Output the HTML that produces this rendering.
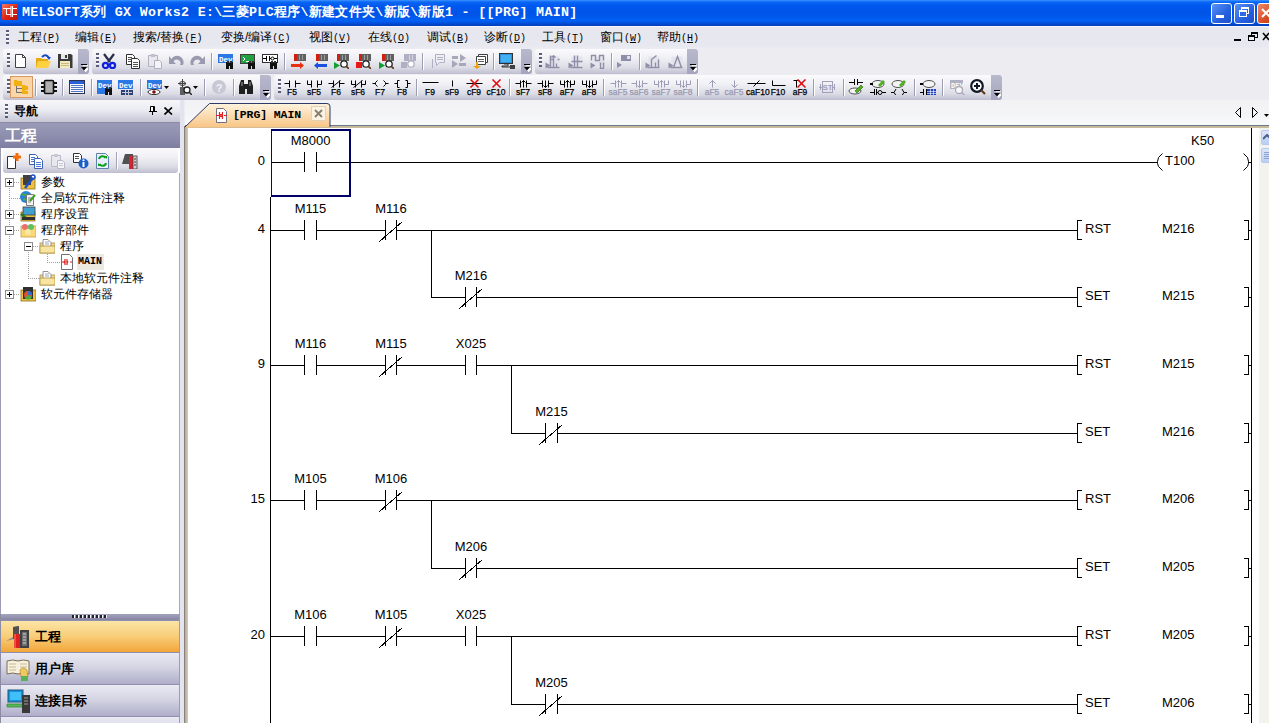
<!DOCTYPE html><html><head><meta charset="utf-8"><style>
*{margin:0;padding:0;box-sizing:border-box}
html,body{width:1269px;height:723px;overflow:hidden;background:#ECECF1;font-family:"Liberation Sans",sans-serif;font-size:12px;color:#000;position:relative}
.a{position:absolute}
#title{left:0;top:0;width:1269px;height:26px;background:linear-gradient(#3D95FF 0px,#0A66F5 2px,#0058EE 6px,#0054E6 14px,#0060F5 21px,#0048D0 24px,#003CB8 26px)}
#title .t{left:22px;top:5px;color:#fff;font-family:"Liberation Mono",monospace;font-weight:bold;font-size:13.3px;white-space:nowrap;letter-spacing:0.3px;line-height:15px}
.mi{top:30px;font-size:12px;white-space:nowrap;line-height:14px}
.tb{height:25px;border-radius:3px;background:linear-gradient(#FBFBFD,#F0F0F5 35%,#DCDCE6 75%,#BDBDCF)}
.grip{width:3px;height:14px;top:4px;background:repeating-linear-gradient(#5C5C78 0 2px,#fff 2px 3px,transparent 3px 4px)}
.chev{top:0;right:0;width:11px;height:25px;border-radius:0 3px 3px 0;background:linear-gradient(#B9B9CD,#A4A4BE)}
.sep{width:1px;height:17px;top:4px;background:#A3A3B8;box-shadow:1px 0 0 #fff}
.ic{width:16px;height:16px;top:4px}
.fk{top:0;width:20px;height:25px}
.fk .l{position:absolute;left:0;width:100%;top:13px;text-align:center;font-size:8.5px;line-height:8px;font-weight:normal;-webkit-text-stroke:0.25px #000;font-family:"Liberation Sans",sans-serif;color:#000}
.fk.g .l{color:#9898B0;-webkit-text-stroke:0.25px #9898B0}
.tree{font-size:12px;line-height:14px;white-space:nowrap}
.ob{left:0;width:180px;height:32px;border-top:1px solid #8F8FAF}
.ob .tx{position:absolute;left:35px;top:8px;font-size:13px;font-weight:bold;line-height:15px}
</style></head><body>
<div id="title" class="a">
<div class="a" style="left:2px;top:4px;width:16px;height:16px;background:linear-gradient(135deg,#F87A60,#E02818 50%,#B81008);border-radius:1px"></div>
<svg class="a" style="left:2px;top:4px" width="16" height="16"><path d="M1 4.5H9M4.5 4.5V10.5H9M9 2v11M10.5 2v11M10.5 4.5H15M10.5 10.5H15" stroke="#fff" stroke-width="1" fill="none"/></svg>
<div class="t a">MELSOFT系列 GX Works2 E:\三菱PLC程序\新建文件夹\新版\新版1 - [[PRG] MAIN]</div>
<div class="a" style="left:1211px;top:3px;width:21px;height:21px;border:1px solid #fff;border-radius:3px;background:linear-gradient(135deg,#5A92F5,#2560E0 60%,#1F4FC8)"></div>
<div class="a" style="left:1216px;top:15px;width:8px;height:3px;background:#fff"></div>
<div class="a" style="left:1234px;top:3px;width:21px;height:21px;border:1px solid #fff;border-radius:3px;background:linear-gradient(135deg,#5A92F5,#2560E0 60%,#1F4FC8)"></div>
<div class="a" style="left:1241px;top:7px;width:8px;height:7px;border:1px solid #fff;border-top-width:2px"></div>
<div class="a" style="left:1239px;top:10px;width:8px;height:7px;border:1px solid #fff;border-top-width:2px;background:#2D68E4"></div>
<div class="a" style="left:1257px;top:3px;width:21px;height:21px;border:1px solid #fff;border-radius:3px;background:linear-gradient(135deg,#F08A68,#D84A22 60%,#C03A16)"></div>
<svg class="a" style="left:1260px;top:6px" width="12" height="14"><path d="M2 3L10 11M10 3L2 11" stroke="#fff" stroke-width="2"/></svg>
</div>
<div class="a" style="left:0;top:26px;width:1269px;height:23px;background:linear-gradient(#F4F6FA 0,#F4F6FA 1px,#E6E6EE 1px,#E8E8F0 20px,#ECECF2)"></div>
<div class="a grip" style="left:6px;top:30px;height:14px"></div>
<div class="a mi" style="left:18px">工程<span style="font-family:'Liberation Mono',monospace;font-size:10px">(<u>P</u>)</span></div>
<div class="a mi" style="left:75px">编辑<span style="font-family:'Liberation Mono',monospace;font-size:10px">(<u>E</u>)</span></div>
<div class="a mi" style="left:133px">搜索/替换<span style="font-family:'Liberation Mono',monospace;font-size:10px">(<u>F</u>)</span></div>
<div class="a mi" style="left:221px">变换/编译<span style="font-family:'Liberation Mono',monospace;font-size:10px">(<u>C</u>)</span></div>
<div class="a mi" style="left:309px">视图<span style="font-family:'Liberation Mono',monospace;font-size:10px">(<u>V</u>)</span></div>
<div class="a mi" style="left:368px">在线<span style="font-family:'Liberation Mono',monospace;font-size:10px">(<u>O</u>)</span></div>
<div class="a mi" style="left:427px">调试<span style="font-family:'Liberation Mono',monospace;font-size:10px">(<u>B</u>)</span></div>
<div class="a mi" style="left:484px">诊断<span style="font-family:'Liberation Mono',monospace;font-size:10px">(<u>D</u>)</span></div>
<div class="a mi" style="left:542px">工具<span style="font-family:'Liberation Mono',monospace;font-size:10px">(<u>T</u>)</span></div>
<div class="a mi" style="left:600px">窗口<span style="font-family:'Liberation Mono',monospace;font-size:10px">(<u>W</u>)</span></div>
<div class="a mi" style="left:657px">帮助<span style="font-family:'Liberation Mono',monospace;font-size:10px">(<u>H</u>)</span></div>
<div class="a" style="left:1234px;top:39px;width:7px;height:2px;background:#000"></div>
<div class="a" style="left:1251px;top:32px;width:7px;height:6px;border:1px solid #000;border-top-width:2px"></div>
<div class="a" style="left:1248px;top:35px;width:7px;height:6px;border:1px solid #000;border-top-width:2px;background:#EDEDF2"></div>
<svg class="a" style="left:1262px;top:32px" width="8" height="9"><path d="M1 1L7 8M7 1L1 8" stroke="#000" stroke-width="1.5"/></svg>
<div class="a tb" style="left:3px;top:49px;width:86px">
<div class="a grip" style="left:4px"></div>
<div class="a chev"><svg class="a" style="left:2px;top:15px" width="8" height="8"><path d="M2 1h6M2 3.5h6l-3 3.5z" stroke="#fff" stroke-width="1" fill="#fff" transform="translate(0.7,0.7)"/><path d="M1 0.5h6M1 3h6l-3 3.5z" stroke="none" fill="#000"/><path d="M1 0.5h6" stroke="#000"/></svg></div>
</div>
<div class="a tb" style="left:92px;top:49px;width:440px">
<div class="a grip" style="left:4px"></div>
<div class="a chev"><svg class="a" style="left:2px;top:15px" width="8" height="8"><path d="M2 1h6M2 3.5h6l-3 3.5z" stroke="#fff" stroke-width="1" fill="#fff" transform="translate(0.7,0.7)"/><path d="M1 0.5h6M1 3h6l-3 3.5z" stroke="none" fill="#000"/><path d="M1 0.5h6" stroke="#000"/></svg></div>
</div>
<div class="a tb" style="left:535px;top:49px;width:163px">
<div class="a grip" style="left:4px"></div>
<div class="a chev"><svg class="a" style="left:2px;top:15px" width="8" height="8"><path d="M2 1h6M2 3.5h6l-3 3.5z" stroke="#fff" stroke-width="1" fill="#fff" transform="translate(0.7,0.7)"/><path d="M1 0.5h6M1 3h6l-3 3.5z" stroke="none" fill="#000"/><path d="M1 0.5h6" stroke="#000"/></svg></div>
</div>
<div class="a tb" style="left:3px;top:75px;width:268px">
<div class="a grip" style="left:4px"></div>
<div class="a chev"><svg class="a" style="left:2px;top:15px" width="8" height="8"><path d="M2 1h6M2 3.5h6l-3 3.5z" stroke="#fff" stroke-width="1" fill="#fff" transform="translate(0.7,0.7)"/><path d="M1 0.5h6M1 3h6l-3 3.5z" stroke="none" fill="#000"/><path d="M1 0.5h6" stroke="#000"/></svg></div>
</div>
<div class="a tb" style="left:274px;top:75px;width:728px">
<div class="a grip" style="left:4px"></div>
<div class="a chev"><svg class="a" style="left:2px;top:15px" width="8" height="8"><path d="M2 1h6M2 3.5h6l-3 3.5z" stroke="#fff" stroke-width="1" fill="#fff" transform="translate(0.7,0.7)"/><path d="M1 0.5h6M1 3h6l-3 3.5z" stroke="none" fill="#000"/><path d="M1 0.5h6" stroke="#000"/></svg></div>
</div>
<svg class="a" style="left:13px;top:53px" width="16" height="16" viewBox="0 0 16 16"><path d="M2.5 1.5h7l3 3v10h-10z" fill="#fff" stroke="#404040"/><path d="M9.5 1.5v3h3" fill="none" stroke="#404040"/></svg>
<svg class="a" style="left:35px;top:53px" width="16" height="16" viewBox="0 0 16 16"><path d="M1 5h5l1 1h6v8H1z" fill="#E8A810"/><path d="M3 8h13l-3 7H1z" fill="#FFD040"/><path d="M7 4q4-4 7 1" stroke="#1848C0" stroke-width="2" fill="none"/><path d="M12 4h4l-2 3z" fill="#1848C0"/></svg>
<svg class="a" style="left:57px;top:53px" width="16" height="16" viewBox="0 0 16 16"><path d="M1 1h13l1.5 1.5V15H1z" fill="#3A3A3A"/><rect x="4" y="1" width="7" height="5" fill="#E8E8E8"/><rect x="8" y="2" width="2" height="3" fill="#3A3A3A"/><rect x="3" y="8" width="10" height="7" fill="#F2E8C0"/><path d="M4 10.5h8M4 12.5h8" stroke="#C8B880"/></svg>
<svg class="a" style="left:101px;top:53px" width="16" height="16" viewBox="0 0 16 16"><path d="M3 1l6 8M13 1L7 9" stroke="#283048" stroke-width="2.2"/><circle cx="4.5" cy="12.5" r="2.6" fill="none" stroke="#1020E0" stroke-width="2.2"/><circle cx="11.5" cy="12.5" r="2.6" fill="none" stroke="#1020E0" stroke-width="2.2"/></svg>
<svg class="a" style="left:125px;top:53px" width="16" height="16" viewBox="0 0 16 16"><path d="M1.5 1.5h6l2 2v8h-8z" fill="#fff" stroke="#303030"/><path d="M6.5 5.5h6l2 2v8h-8z" fill="#fff" stroke="#303030"/><path d="M3 4.5h4M3 6.5h4M3 8.5h3M8 9.5h5M8 11.5h5M8 13.5h5" stroke="#505050"/></svg>
<svg class="a" style="left:147px;top:53px" width="16" height="16" viewBox="0 0 16 16"><path d="M1.5 2.5h9v11h-9z" fill="#E8E8EE" stroke="#B0B0C0"/><rect x="4" y="1" width="4" height="3" fill="#C0C0CC"/><path d="M7.5 7.5h5l2 2v6h-7z" fill="#F4F4F8" stroke="#B0B0C0"/></svg>
<svg class="a" style="left:168px;top:53px" width="16" height="16" viewBox="0 0 16 16"><path d="M1 3v8h7l-2.5-2.5A3.5 3.5 0 0 1 12 12h3A6.5 6.5 0 0 0 3.5 6z" fill="#9A9AAE"/></svg>
<svg class="a" style="left:190px;top:53px" width="16" height="16" viewBox="0 0 16 16"><path d="M15 3v8H8l2.5-2.5A3.5 3.5 0 0 0 4 12H1A6.5 6.5 0 0 1 12.5 6z" fill="#9A9AAE"/></svg>
<div class="a" style="left:211px;top:53px;width:1px;height:17px;background:#9C9CB2;box-shadow:1px 0 0 #fff"></div>
<svg class="a" style="left:218px;top:53px" width="16" height="16" viewBox="0 0 16 16"><rect x="0" y="1" width="15" height="9" fill="#2B78E4"/><text x="1" y="8.5" font-size="7.5" font-weight="bold" fill="#fff" font-family="Liberation Mono">Dev</text><path d="M8 9h3v1h1V9h3v7h-3v-3h-1v3H8z" fill="#101010"/><rect x="9" y="8" width="2" height="2" fill="#303030"/><rect x="12" y="8" width="2" height="2" fill="#303030"/></svg>
<svg class="a" style="left:240px;top:53px" width="16" height="16" viewBox="0 0 16 16"><rect x="0.5" y="1.5" width="14" height="9" fill="#20A040" stroke="#404040"/><path d="M3 4l2 2-2 2M6 8.5h4" stroke="#fff" fill="none"/><path d="M8 9h3v1h1V9h3v7h-3v-3h-1v3H8z" fill="#101010"/><rect x="9" y="8" width="2" height="2" fill="#303030"/><rect x="12" y="8" width="2" height="2" fill="#303030"/></svg>
<svg class="a" style="left:262px;top:53px" width="16" height="16" viewBox="0 0 16 16"><rect x="0.5" y="1.5" width="15" height="8" fill="#fff" stroke="#303030"/><path d="M1 5.5h3M4.5 3v5M7.5 3v5M7 5.5h2M12 5.5h3" stroke="#000"/><circle cx="10.5" cy="5.5" r="1.5" fill="none" stroke="#000"/><path d="M8 9h3v1h1V9h3v7h-3v-3h-1v3H8z" fill="#101010"/><rect x="9" y="8" width="2" height="2" fill="#303030"/><rect x="12" y="8" width="2" height="2" fill="#303030"/></svg>
<div class="a" style="left:284px;top:53px;width:1px;height:17px;background:#9C9CB2;box-shadow:1px 0 0 #fff"></div>
<svg class="a" style="left:290px;top:53px" width="16" height="16" viewBox="0 0 16 16"><rect x="4" y="1" width="12" height="7" fill="#606060"/><rect x="4" y="1" width="3" height="7" fill="#D02010"/><path d="M9.5 2v5M12.5 2v5" stroke="#A0A0A0"/><path d="M1 11h9v-2l4 3.5-4 3.5v-2H1z" fill="#E83010"/></svg>
<svg class="a" style="left:312px;top:53px" width="16" height="16" viewBox="0 0 16 16"><rect x="4" y="1" width="12" height="7" fill="#606060"/><rect x="4" y="1" width="3" height="7" fill="#D02010"/><path d="M9.5 2v5M12.5 2v5" stroke="#A0A0A0"/><path d="M15 11H6V9l-4 3.5 4 3.5v-2h9z" fill="#1850E0"/></svg>
<svg class="a" style="left:333px;top:53px" width="16" height="16" viewBox="0 0 16 16"><rect x="4" y="1" width="12" height="7" fill="#606060"/><rect x="4" y="1" width="3" height="7" fill="#D02010"/><path d="M9.5 2v5M12.5 2v5" stroke="#A0A0A0"/><path d="M1 9v7l6-3.5z" fill="#10A030"/><circle cx="11" cy="11" r="3.2" fill="#fff" stroke="#202020" stroke-width="1.3"/><path d="M13 13l3 3" stroke="#603010" stroke-width="1.6"/></svg>
<svg class="a" style="left:355px;top:53px" width="16" height="16" viewBox="0 0 16 16"><rect x="4" y="1" width="12" height="7" fill="#606060"/><rect x="4" y="1" width="3" height="7" fill="#D02010"/><path d="M9.5 2v5M12.5 2v5" stroke="#A0A0A0"/><rect x="1" y="9" width="6" height="6" fill="#E81818"/><circle cx="11" cy="11" r="3.2" fill="#fff" stroke="#202020" stroke-width="1.3"/><path d="M13 13l3 3" stroke="#603010" stroke-width="1.6"/></svg>
<svg class="a" style="left:378px;top:53px" width="16" height="16" viewBox="0 0 16 16"><rect x="4" y="1" width="12" height="7" fill="#606060"/><rect x="4" y="1" width="3" height="7" fill="#D02010"/><path d="M9.5 2v5M12.5 2v5" stroke="#A0A0A0"/><path d="M1 9v7l6-3.5z" fill="#10A030"/><circle cx="11" cy="11" r="3.2" fill="#fff" stroke="#202020" stroke-width="1.3"/><path d="M13 13l3 3" stroke="#603010" stroke-width="1.6"/></svg>
<svg class="a" style="left:400px;top:53px" width="16" height="16" viewBox="0 0 16 16"><rect x="4" y="1" width="12" height="7" fill="#B0B0C4"/><path d="M9.5 2v5M12.5 2v5" stroke="#D8D8E0"/><rect x="1" y="9" width="6" height="6" fill="#B0B0C4"/><circle cx="11" cy="11" r="3.2" fill="#fff" stroke="#B0B0C4" stroke-width="1.3"/></svg>
<div class="a" style="left:422px;top:53px;width:1px;height:17px;background:#9C9CB2;box-shadow:1px 0 0 #fff"></div>
<svg class="a" style="left:430px;top:53px" width="16" height="16" viewBox="0 0 16 16"><path d="M5.5 1.5h9v8h-5l-3 3v-3h-1z" fill="#F0F0F4" stroke="#B0B0C4"/><path d="M2.5 6v9" stroke="#B0B0C4"/><path d="M7 4.5h6M7 6.5h6" stroke="#B0B0C4"/></svg>
<svg class="a" style="left:451px;top:53px" width="16" height="16" viewBox="0 0 16 16"><path d="M9 1l6 4-6 4zM1 7l6 4-6 4z" fill="#A8A8B8"/><rect x="1" y="3" width="6" height="3" fill="#A8A8B8"/><rect x="8" y="10" width="7" height="3" fill="#A8A8B8"/></svg>
<svg class="a" style="left:472px;top:53px" width="16" height="16" viewBox="0 0 16 16"><path d="M6.5 1.5h9v8h-9z" fill="#fff" stroke="#404040"/><path d="M4.5 3.5h9v8h-9z" fill="#fff" stroke="#404040"/><path d="M6 6.5h6M6 8.5h6" stroke="#606060"/><path d="M4 9v4h-3l4 3 4-3H6V9z" fill="#F0A010"/></svg>
<div class="a" style="left:493px;top:53px;width:1px;height:17px;background:#9C9CB2;box-shadow:1px 0 0 #fff"></div>
<svg class="a" style="left:499px;top:53px" width="16" height="16" viewBox="0 0 16 16"><rect x="0.5" y="0.5" width="13" height="10" fill="#3090E0" stroke="#303030"/><rect x="2" y="2" width="10" height="7" fill="#40B0F0"/><path d="M5 11h4v2H3v1h8" stroke="#303030" fill="none"/><rect x="11" y="12" width="5" height="4" fill="#404040"/></svg>
<svg class="a" style="left:544px;top:53px" width="16" height="16" viewBox="0 0 16 16"><g transform="translate(0.5,0.5)"><rect x="4" y="3" width="11" height="11" fill="#E4E4EC"/><path d="M1 9v6l5-3z" fill="#8E8EA8"/><path d="M3 14h12M6 2v12M9 2v12M6 6h3M12 10v4M13 6h2" stroke="#8E8EA8" stroke-width="1.4"/><path d="M7 4q2-3 4 0" stroke="#8E8EA8" stroke-width="1.4" fill="none"/></g></svg>
<svg class="a" style="left:567px;top:53px" width="16" height="16" viewBox="0 0 16 16"><g transform="translate(0.5,0.5)"><rect x="4" y="3" width="11" height="11" fill="#E4E4EC"/><path d="M1 9v6l5-3z" fill="#8E8EA8"/><path d="M3 14h12M7 2v12M10 2v12M4 8h11" stroke="#8E8EA8" stroke-width="1.4"/></g></svg>
<svg class="a" style="left:589px;top:53px" width="16" height="16" viewBox="0 0 16 16"><g transform="translate(0.5,0.5)"><rect x="4" y="3" width="11" height="11" fill="#E4E4EC"/><path d="M1 9v6l5-3z" fill="#8E8EA8"/><path d="M2 7V2h4v5h4V2h4v5M11 9v6h3V9" stroke="#8E8EA8" stroke-width="1.4" fill="none"/></g></svg>
<div class="a" style="left:611px;top:53px;width:1px;height:17px;background:#9C9CB2;box-shadow:1px 0 0 #fff"></div>
<svg class="a" style="left:616px;top:53px" width="16" height="16" viewBox="0 0 16 16"><path d="M1 9v6l5-3z" fill="#8E8EA8"/><rect x="5" y="2" width="10" height="6" fill="#8E8EA8"/><rect x="11" y="3" width="3" height="3" fill="#E0E0E8"/></svg>
<div class="a" style="left:639px;top:53px;width:1px;height:17px;background:#9C9CB2;box-shadow:1px 0 0 #fff"></div>
<svg class="a" style="left:644px;top:53px" width="16" height="16" viewBox="0 0 16 16"><g transform="translate(0.5,0.5)"><rect x="4" y="3" width="11" height="11" fill="#E4E4EC"/><path d="M1 9v6l5-3z" fill="#8E8EA8"/><path d="M3 14h12M7 14V6l5-4M11 14V9M14 14V6" stroke="#8E8EA8" stroke-width="1.4" fill="none"/></g></svg>
<svg class="a" style="left:667px;top:53px" width="16" height="16" viewBox="0 0 16 16"><g transform="translate(0.5,0.5)"><rect x="4" y="3" width="11" height="11" fill="#E4E4EC"/><path d="M1 9v6l5-3z" fill="#8E8EA8"/><path d="M3 14h12M6 14l4-11 4 11" stroke="#8E8EA8" stroke-width="1.4" fill="none"/></g></svg>
<div class="a" style="left:10px;top:76px;width:23px;height:22px;background:#FAD6A8;border:1px solid #D89860"></div>
<svg class="a" style="left:13px;top:79px" width="16" height="16" viewBox="0 0 16 16"><path d="M3.5 6v7.5h6M3.5 9.5h6" stroke="#707070" fill="none"/><path d="M1 1h3l1 1h4v5H1z" fill="#F0B010"/><path d="M9 6h3l1 1h2v4H9z" fill="#F0B010"/><path d="M9 11h3l1 1h2v3H9z" fill="#F0B010"/></svg>
<div class="a" style="left:35px;top:79px;width:1px;height:17px;background:#9C9CB2;box-shadow:1px 0 0 #fff"></div>
<svg class="a" style="left:41px;top:79px" width="16" height="16" viewBox="0 0 16 16"><rect x="3.5" y="1.5" width="9" height="13" rx="1" fill="#B0B0B0" stroke="#101010" stroke-width="1.6"/><path d="M0 4h3M0 8h3M0 12h3M13 4h3M13 8h3M13 12h3" stroke="#101010" stroke-width="2"/></svg>
<div class="a" style="left:62px;top:79px;width:1px;height:17px;background:#9C9CB2;box-shadow:1px 0 0 #fff"></div>
<svg class="a" style="left:69px;top:79px" width="16" height="16" viewBox="0 0 16 16"><rect x="0.5" y="1.5" width="15" height="13" fill="#F8F8FC" stroke="#30304A"/><rect x="1" y="2" width="14" height="3" fill="#2860D8"/><path d="M2 6.5h12M2 8.5h12M2 10.5h12M2 12.5h12" stroke="#5078C8"/></svg>
<div class="a" style="left:91px;top:79px;width:1px;height:17px;background:#9C9CB2;box-shadow:1px 0 0 #fff"></div>
<svg class="a" style="left:97px;top:79px" width="16" height="16" viewBox="0 0 16 16"><rect x="0" y="1" width="15" height="9" fill="#2B78E4"/><text x="1" y="8.5" font-size="7.5" font-weight="bold" fill="#fff" font-family="Liberation Mono">Dev</text><rect x="0" y="9" width="8" height="6" fill="#2B78E4"/><path d="M8 9h3v1h1V9h3v7h-3v-3h-1v3H8z" fill="#101010"/><rect x="9" y="8" width="2" height="2" fill="#303030"/><rect x="12" y="8" width="2" height="2" fill="#303030"/></svg>
<svg class="a" style="left:118px;top:79px" width="16" height="16" viewBox="0 0 16 16"><rect x="0" y="1" width="15" height="9" fill="#2B78E4"/><text x="1" y="8.5" font-size="7.5" font-weight="bold" fill="#fff" font-family="Liberation Mono">Dev</text><rect x="3" y="11" width="12" height="5" fill="#304070"/><path d="M4 13.5h10M7.5 11v5M10.5 11v5" stroke="#C0C8E0"/></svg>
<div class="a" style="left:140px;top:79px;width:1px;height:17px;background:#9C9CB2;box-shadow:1px 0 0 #fff"></div>
<svg class="a" style="left:147px;top:79px" width="16" height="16" viewBox="0 0 16 16"><rect x="0" y="1" width="15" height="9" fill="#2B78E4"/><text x="1" y="8.5" font-size="7.5" font-weight="bold" fill="#fff" font-family="Liberation Mono">Dev</text><ellipse cx="7" cy="13" rx="6" ry="2.6" fill="#fff" stroke="#303030"/><circle cx="7" cy="13" r="1.8" fill="#801010"/></svg>
<svg class="a" style="left:164px;top:86px" width="5" height="3" viewBox="0 0 5 3"><path d="M0 0h5l-2.5 3z" fill="#000"/></svg>
<svg class="a" style="left:176px;top:79px" width="16" height="16" viewBox="0 0 16 16"><path d="M6.5 0v16M2 4.5h8" stroke="#404040"/><ellipse cx="6.5" cy="4.5" rx="3" ry="2" fill="none" stroke="#404040"/><rect x="4" y="8" width="5" height="8" fill="#606060"/><circle cx="11" cy="11" r="3" fill="#fff" stroke="#202020" stroke-width="1.3"/><path d="M13 13l3 3" stroke="#202020" stroke-width="1.5"/></svg>
<svg class="a" style="left:193px;top:86px" width="5" height="3" viewBox="0 0 5 3"><path d="M0 0h5l-2.5 3z" fill="#000"/></svg>
<div class="a" style="left:204px;top:79px;width:1px;height:17px;background:#9C9CB2;box-shadow:1px 0 0 #fff"></div>
<svg class="a" style="left:211px;top:79px" width="16" height="16" viewBox="0 0 16 16"><circle cx="8" cy="8" r="7" fill="#C8C8D4"/><text x="8" y="12.5" text-anchor="middle" font-size="11" font-weight="bold" fill="#F0F0F4" font-family="Liberation Sans">?</text></svg>
<div class="a" style="left:233px;top:79px;width:1px;height:17px;background:#9C9CB2;box-shadow:1px 0 0 #fff"></div>
<svg class="a" style="left:238px;top:79px" width="16" height="16" viewBox="0 0 16 16"><path d="M1 7l2-6h3v4h4V1h3l2 6v8h-6v-5H7v5H1z" fill="#202020"/><rect x="3" y="3" width="2" height="4" fill="#606060"/><rect x="11" y="3" width="2" height="4" fill="#606060"/></svg>
<div class="a fk" style="left:282px;top:75px"><svg class="a" style="left:0;top:4px" width="20" height="10" viewBox="0 0 20 10"><g transform="translate(0.5,0.5)"><path d="M2 4h5M7 1v7M13 1v7M13 4h5" stroke="#000" fill="none"/></g></svg><div class="l">F5</div></div>
<div class="a fk" style="left:304px;top:75px"><svg class="a" style="left:0;top:4px" width="20" height="10" viewBox="0 0 20 10"><g transform="translate(0.5,0.5)"><path d="M3 1v4h4M7 1v7M13 1v7M13 5h4M17 1v4" stroke="#000" fill="none"/></g></svg><div class="l">sF5</div></div>
<div class="a fk" style="left:326px;top:75px"><svg class="a" style="left:0;top:4px" width="20" height="10" viewBox="0 0 20 10"><g transform="translate(0.5,0.5)"><path d="M2 4h5M7 1v7M13 1v7M13 4h5M5 8l9-7" stroke="#000" fill="none"/></g></svg><div class="l">F6</div></div>
<div class="a fk" style="left:348px;top:75px"><svg class="a" style="left:0;top:4px" width="20" height="10" viewBox="0 0 20 10"><g transform="translate(0.5,0.5)"><path d="M3 1v4h4M7 1v7M13 1v7M13 5h4M17 1v4M5 8l9-7" stroke="#000" fill="none"/></g></svg><div class="l">sF6</div></div>
<div class="a fk" style="left:370px;top:75px"><svg class="a" style="left:0;top:4px" width="20" height="10" viewBox="0 0 20 10"><g transform="translate(0.5,0.5)"><path d="M2 4h3M18 4h-3M7 1L5 3v2l2 2M13 1l2 2v2l-2 2" stroke="#000" fill="none"/></g></svg><div class="l">F7</div></div>
<div class="a fk" style="left:392px;top:75px"><svg class="a" style="left:0;top:4px" width="20" height="10" viewBox="0 0 20 10"><g transform="translate(0.5,0.5)"><path d="M2 4h3M18 4h-3M7 1h-2v7h2M13 1h2v7h-2" stroke="#000" fill="none"/></g></svg><div class="l">F8</div></div>
<div class="a" style="left:416px;top:79px;width:1px;height:17px;background:#9C9CB2;box-shadow:1px 0 0 #fff"></div>
<div class="a fk" style="left:420px;top:75px"><svg class="a" style="left:0;top:4px" width="20" height="10" viewBox="0 0 20 10"><g transform="translate(0.5,0.5)"><path d="M2 3h16" stroke="#000"/></g></svg><div class="l">F9</div></div>
<div class="a fk" style="left:442px;top:75px"><svg class="a" style="left:0;top:4px" width="20" height="10" viewBox="0 0 20 10"><g transform="translate(0.5,0.5)"><path d="M10 1v6" stroke="#000"/></g></svg><div class="l">sF9</div></div>
<div class="a fk" style="left:464px;top:75px"><svg class="a" style="left:0;top:4px" width="20" height="10" viewBox="0 0 20 10"><g transform="translate(0.5,0.5)"><path d="M2 4h16" stroke="#000"/><path d="M6 0l8 8M14 0l-8 8" stroke="#E01010" stroke-width="1.6"/></g></svg><div class="l">cF9</div></div>
<div class="a fk" style="left:486px;top:75px"><svg class="a" style="left:0;top:4px" width="20" height="10" viewBox="0 0 20 10"><g transform="translate(0.5,0.5)"><path d="M6 0l8 8M14 0l-8 8" stroke="#E01010" stroke-width="1.6"/></g></svg><div class="l">cF10</div></div>
<div class="a" style="left:509px;top:79px;width:1px;height:17px;background:#9C9CB2;box-shadow:1px 0 0 #fff"></div>
<div class="a fk" style="left:513px;top:75px"><svg class="a" style="left:0;top:4px" width="20" height="10" viewBox="0 0 20 10"><g transform="translate(0.5,0.5)"><path d="M2 4h5M7 1v7M13 1v7M13 4h5M10 1v7M8 3l2-2 2 2" stroke="#000" fill="none"/></g></svg><div class="l">sF7</div></div>
<div class="a fk" style="left:535px;top:75px"><svg class="a" style="left:0;top:4px" width="20" height="10" viewBox="0 0 20 10"><g transform="translate(0.5,0.5)"><path d="M2 4h5M7 1v7M13 1v7M13 4h5M10 1v7M8 6l2 2 2-2" stroke="#000" fill="none"/></g></svg><div class="l">sF8</div></div>
<div class="a fk" style="left:557px;top:75px"><svg class="a" style="left:0;top:4px" width="20" height="10" viewBox="0 0 20 10"><g transform="translate(0.5,0.5)"><path d="M3 1v4h4M7 1v7M13 1v7M13 5h4M17 1v4M10 1v7M8 3l2-2 2 2" stroke="#000" fill="none"/></g></svg><div class="l">aF7</div></div>
<div class="a fk" style="left:579px;top:75px"><svg class="a" style="left:0;top:4px" width="20" height="10" viewBox="0 0 20 10"><g transform="translate(0.5,0.5)"><path d="M3 1v4h4M7 1v7M13 1v7M13 5h4M17 1v4M10 1v7M8 6l2 2 2-2" stroke="#000" fill="none"/></g></svg><div class="l">aF8</div></div>
<div class="a" style="left:603px;top:79px;width:1px;height:17px;background:#9C9CB2;box-shadow:1px 0 0 #fff"></div>
<div class="a fk g" style="left:608px;top:75px"><svg class="a" style="left:0;top:4px" width="20" height="10" viewBox="0 0 20 10"><g transform="translate(0.5,0.5)"><path d="M2 4h5M7 1v7M13 1v7M13 4h5M10 1v7M8 3l2-2 2 2" stroke="#9C9CB4" fill="none"/></g></svg><div class="l">saF5</div></div>
<div class="a fk g" style="left:629px;top:75px"><svg class="a" style="left:0;top:4px" width="20" height="10" viewBox="0 0 20 10"><g transform="translate(0.5,0.5)"><path d="M2 4h5M7 1v7M13 1v7M13 4h5M10 1v7M8 6l2 2 2-2" stroke="#9C9CB4" fill="none"/></g></svg><div class="l">saF6</div></div>
<div class="a fk g" style="left:651px;top:75px"><svg class="a" style="left:0;top:4px" width="20" height="10" viewBox="0 0 20 10"><g transform="translate(0.5,0.5)"><path d="M3 1v4h4M7 1v7M13 1v7M13 5h4M17 1v4M10 1v7M8 3l2-2 2 2" stroke="#9C9CB4" fill="none"/></g></svg><div class="l">saF7</div></div>
<div class="a fk g" style="left:673px;top:75px"><svg class="a" style="left:0;top:4px" width="20" height="10" viewBox="0 0 20 10"><g transform="translate(0.5,0.5)"><path d="M3 1v4h4M7 1v7M13 1v7M13 5h4M17 1v4M10 1v7M8 6l2 2 2-2" stroke="#9C9CB4" fill="none"/></g></svg><div class="l">saF8</div></div>
<div class="a" style="left:697px;top:79px;width:1px;height:17px;background:#9C9CB2;box-shadow:1px 0 0 #fff"></div>
<div class="a fk g" style="left:702px;top:75px"><svg class="a" style="left:0;top:4px" width="20" height="10" viewBox="0 0 20 10"><g transform="translate(0.5,0.5)"><path d="M10 1v7M7 4l3-3 3 3" stroke="#9C9CB4" fill="none"/></g></svg><div class="l">aF5</div></div>
<div class="a fk g" style="left:724px;top:75px"><svg class="a" style="left:0;top:4px" width="20" height="10" viewBox="0 0 20 10"><g transform="translate(0.5,0.5)"><path d="M10 1v7M7 5l3 3 3-3" stroke="#9C9CB4" fill="none"/></g></svg><div class="l">caF5</div></div>
<div class="a fk" style="left:746px;top:75px"><svg class="a" style="left:0;top:4px" width="20" height="10" viewBox="0 0 20 10"><g transform="translate(0.5,0.5)"><path d="M1 4h18M7 7l6-6" stroke="#000" fill="none"/></g></svg><div class="l">caF10</div></div>
<div class="a fk" style="left:768px;top:75px"><svg class="a" style="left:0;top:4px" width="20" height="10" viewBox="0 0 20 10"><g transform="translate(0.5,0.5)"><path d="M4 1v5h13" stroke="#000" fill="none"/></g></svg><div class="l">F10</div></div>
<div class="a fk" style="left:790px;top:75px"><svg class="a" style="left:0;top:4px" width="20" height="10" viewBox="0 0 20 10"><g transform="translate(0.5,0.5)"><path d="M3 1h6M6 1v7" stroke="#000"/><path d="M7 0l8 8M15 0l-8 8" stroke="#E01010" stroke-width="1.6"/></g></svg><div class="l">aF9</div></div>
<div class="a" style="left:813px;top:79px;width:1px;height:17px;background:#9C9CB2;box-shadow:1px 0 0 #fff"></div>
<svg class="a" style="left:819px;top:79px" width="16" height="16" viewBox="0 0 16 16"><rect x="3.5" y="2.5" width="10" height="11" fill="none" stroke="#A0A0B8"/><path d="M0 8.5h3M14 8.5h2M1.5 5v6M15.5 5v6" stroke="#A0A0B8"/><text x="8.5" y="11" text-anchor="middle" font-size="8" font-weight="bold" fill="#A0A0B8" font-family="Liberation Sans">ST</text></svg>
<div class="a" style="left:843px;top:79px;width:1px;height:17px;background:#9C9CB2;box-shadow:1px 0 0 #fff"></div>
<svg class="a" style="left:848px;top:79px" width="16" height="16" viewBox="0 0 16 16"><path d="M1 3.5h5M10 3.5h5M6.5 0v6M9.5 0v6" stroke="#000"/><ellipse cx="7" cy="12" rx="6" ry="3" fill="#F4F4F4" stroke="#505050"/><path d="M9 14l6-6-2-2-6 6z" fill="#50B020" stroke="#306010" stroke-width=".6"/></svg>
<svg class="a" style="left:870px;top:79px" width="16" height="16" viewBox="0 0 16 16"><ellipse cx="8" cy="5" rx="6" ry="3.5" fill="#F4F4F4" stroke="#505050"/><rect x="0" y="4" width="3" height="2" fill="#000"/><path d="M10 8l5-5-2-2-5 5z" fill="#50B020"/><path d="M0 13.5h4M4.5 10v6M6.5 10v6M6 13.5h2M12 13.5h4" stroke="#000"/><circle cx="10" cy="13.5" r="2" fill="none" stroke="#000"/></svg>
<svg class="a" style="left:891px;top:79px" width="16" height="16" viewBox="0 0 16 16"><ellipse cx="7" cy="5" rx="6" ry="3.5" fill="#F4F4F4" stroke="#505050"/><path d="M10 8l5-5-2-2-5 5z" fill="#50B020"/><path d="M0 13.5h3M5 10l-2 3.5 2 3M11 10l2 3.5-2 3M13 13.5h3" stroke="#000" fill="none"/></svg>
<div class="a" style="left:914px;top:79px;width:1px;height:17px;background:#9C9CB2;box-shadow:1px 0 0 #fff"></div>
<svg class="a" style="left:920px;top:79px" width="16" height="16" viewBox="0 0 16 16"><ellipse cx="9" cy="5" rx="6" ry="3.5" fill="#F4F4F4" stroke="#505050"/><rect x="0" y="4" width="3" height="2" fill="#000"/><path d="M0 13.5h3M3.5 10v6M6.5 10v6" stroke="#000"/><rect x="7" y="10" width="9" height="6" fill="#2040C0"/><path d="M7 12.5h9M7 14.5h9M10.5 10v6M13.5 10v6" stroke="#fff" stroke-width=".6"/></svg>
<div class="a" style="left:942px;top:79px;width:1px;height:17px;background:#9C9CB2;box-shadow:1px 0 0 #fff"></div>
<svg class="a" style="left:949px;top:79px" width="16" height="16" viewBox="0 0 16 16"><rect x="1" y="1" width="13" height="9" fill="#B0B0C4"/><text x="2" y="8.5" font-size="7" font-weight="bold" fill="#fff" font-family="Liberation Mono">DEV</text><circle cx="10" cy="11" r="3.5" fill="#F8F8F8" stroke="#A8A8BC" stroke-width="1.3"/><path d="M12.5 13.5l3 2.5" stroke="#A8A8BC" stroke-width="1.5"/></svg>
<svg class="a" style="left:970px;top:79px" width="16" height="16" viewBox="0 0 16 16"><circle cx="7" cy="7" r="5.8" fill="#fff" stroke="#101828" stroke-width="2.2"/><path d="M4 7h6M7 4v6" stroke="#101828" stroke-width="2"/><path d="M11 11l4 4" stroke="#603810" stroke-width="2.2"/></svg>
<div class="a" style="left:0;top:100px;width:180px;height:623px;background:#fff;border-left:1px solid #9C9CB4"></div>
<div class="a" style="left:0;top:100px;width:180px;height:23px;background:linear-gradient(#F6F6FA,#EAEAF2 45%,#C6C6D6 95%,#8C8CA8 95%)"></div>
<div class="a grip" style="left:5px;top:104px"></div>
<div class="a" style="left:14px;top:104px;font-size:12px;font-weight:bold;line-height:14px">导航</div>
<svg class="a" style="left:149px;top:106px" width="8" height="10"><path d="M1.5 0.5h4v5h-4z" fill="#fff" stroke="#000"/><rect x="4" y="1" width="2" height="4" fill="#000"/><path d="M0 5.5h8M3.5 5v4" stroke="#000"/></svg>
<svg class="a" style="left:164px;top:107px" width="9" height="8"><path d="M0.5 0.5L8 7.5M8 0.5L0.5 7.5" stroke="#000" stroke-width="1.7"/></svg>
<div class="a" style="left:0;top:123px;width:180px;height:25px;background:linear-gradient(#9A9AB8,#8E8EAE 50%,#7E7EA2)"></div>
<div class="a" style="left:5px;top:127px;font-size:16px;font-weight:bold;color:#fff;line-height:17px">工程</div>
<div class="a tb" style="left:3px;top:148px;width:175px;height:25px"></div>
<div class="a sep" style="left:116px;top:152px"></div>
<div class="a" style="left:179px;top:173px;width:1px;height:441px;background:#A8A8C0"></div>
<div class="a" style="left:180px;top:100px;width:4px;height:623px;background:#E4E4F0"></div>
<div class="a" style="left:184px;top:126px;width:1px;height:597px;background:#8A8278"></div>
<div class="a" style="left:0;top:614px;width:180px;height:6px;background:linear-gradient(#A4A4BE,#8686A4)"></div>
<div class="a" style="left:72px;top:615px;width:36px;height:3px;background:repeating-linear-gradient(90deg,#202030 0 2px,#fff 2px 3px,transparent 3px 4px)"></div>
<div class="a ob" style="top:620px;background:linear-gradient(#FCE5A6,#F8CD78 50%,#F2A53A)"><div class="tx">工程</div></div>
<div class="a ob" style="top:652px;background:linear-gradient(#EAEAF4,#D2D2E2 50%,#AEAECA)"><div class="tx">用户库</div></div>
<div class="a ob" style="top:684px;background:linear-gradient(#EAEAF4,#D2D2E2 50%,#AEAECA)"><div class="tx">连接目标</div></div>
<div class="a ob" style="top:716px;background:linear-gradient(#EAEAF4,#D2D2E2 50%,#AEAECA)"></div>
<div class="a" style="left:179px;top:614px;width:1px;height:109px;background:#9C9CB4"></div>
<div class="a" style="left:0;top:614px;width:1px;height:109px;background:#8C8CA4"></div>
<svg class="a" style="left:6px;top:153px" width="16" height="16" viewBox="0 0 16 16"><path d="M1.5 3.5h8v12h-8z" fill="#fff" stroke="#303030"/><path d="M11 0v8M7 4h8" stroke="#F07010" stroke-width="3"/></svg>
<svg class="a" style="left:28px;top:153px" width="16" height="16" viewBox="0 0 16 16"><path d="M1.5 1.5h6l2 2v8h-8z" fill="#fff" stroke="#4060B0"/><path d="M6.5 5.5h6l2 2v8h-8z" fill="#fff" stroke="#4060B0"/><path d="M3 4.5h4M3 6.5h4M3 8.5h3M8 9.5h5M8 11.5h5M8 13.5h5" stroke="#4878D0"/></svg>
<svg class="a" style="left:50px;top:153px" width="16" height="16" viewBox="0 0 16 16"><path d="M1.5 2.5h9v11h-9z" fill="#E8E8EE" stroke="#B8B8C8"/><rect x="4" y="1" width="4" height="3" fill="#C8C8D4"/><path d="M7.5 7.5h5l2 2v6h-7z" fill="#F4F4F8" stroke="#B8B8C8"/><path d="M9 10.5h4M9 12.5h4" stroke="#C8C8D4"/></svg>
<svg class="a" style="left:73px;top:153px" width="16" height="16" viewBox="0 0 16 16"><path d="M0.5 0.5h6l2 2v7h-8z" fill="#fff" stroke="#303030"/><path d="M2 3.5h4M2 5.5h4" stroke="#505050"/><circle cx="10.5" cy="10.5" r="5" fill="#1860C8"/><rect x="9.5" y="9" width="2" height="5" fill="#fff"/><rect x="9.5" y="6.5" width="2" height="1.6" fill="#fff"/></svg>
<svg class="a" style="left:96px;top:153px" width="16" height="16" viewBox="0 0 16 16"><path d="M0.5 0.5h9l3 3v12h-12z" fill="#E8F0FF" stroke="#6080B0"/><path d="M3 6a3.5 3.5 0 0 1 6.5-1M10 10a3.5 3.5 0 0 1-6.5 1" stroke="#10A020" stroke-width="2" fill="none"/><path d="M8 3h3v3zM5 13H2v-3z" fill="#10A020"/></svg>
<svg class="a" style="left:122px;top:153px" width="16" height="16" viewBox="0 0 16 16"><path d="M3 1h8v10H0z" fill="#505050"/><rect x="7" y="3" width="4" height="13" fill="#E02030"/><rect x="11" y="3" width="4" height="13" fill="#D0D0D0" stroke="#404040" stroke-width=".8"/><path d="M12 6h2M12 9h2M12 12h2" stroke="#404040"/></svg>
<div class="a" style="left:9px;top:182px;width:1px;height:112px;background:repeating-linear-gradient(#A0A0A0 0 1px,transparent 1px 2px)"></div>
<div class="a" style="left:28px;top:246px;width:1px;height:32px;background:repeating-linear-gradient(#A0A0A0 0 1px,transparent 1px 2px)"></div>
<div class="a" style="left:47px;top:262px;width:1px;height:0px;background:repeating-linear-gradient(#A0A0A0 0 1px,transparent 1px 2px)"></div>
<div class="a" style="left:14px;top:182px;width:6px;height:1px;background:repeating-linear-gradient(90deg,#A0A0A0 0 1px,transparent 1px 2px)"></div>
<div class="a" style="left:9px;top:198px;width:11px;height:1px;background:repeating-linear-gradient(90deg,#A0A0A0 0 1px,transparent 1px 2px)"></div>
<div class="a" style="left:14px;top:214px;width:6px;height:1px;background:repeating-linear-gradient(90deg,#A0A0A0 0 1px,transparent 1px 2px)"></div>
<div class="a" style="left:14px;top:230px;width:6px;height:1px;background:repeating-linear-gradient(90deg,#A0A0A0 0 1px,transparent 1px 2px)"></div>
<div class="a" style="left:14px;top:294px;width:6px;height:1px;background:repeating-linear-gradient(90deg,#A0A0A0 0 1px,transparent 1px 2px)"></div>
<div class="a" style="left:33px;top:246px;width:6px;height:1px;background:repeating-linear-gradient(90deg,#A0A0A0 0 1px,transparent 1px 2px)"></div>
<div class="a" style="left:28px;top:278px;width:11px;height:1px;background:repeating-linear-gradient(90deg,#A0A0A0 0 1px,transparent 1px 2px)"></div>
<div class="a" style="left:47px;top:254px;width:1px;height:8px;background:repeating-linear-gradient(#A0A0A0 0 1px,transparent 1px 2px)"></div>
<div class="a" style="left:47px;top:262px;width:13px;height:1px;background:repeating-linear-gradient(90deg,#A0A0A0 0 1px,transparent 1px 2px)"></div>
<div class="a" style="left:5px;top:178px;width:9px;height:9px;border:1px solid #8C8C8C;background:#fff"></div>
<div class="a" style="left:7px;top:182px;width:5px;height:1px;background:#000"></div>
<div class="a" style="left:9px;top:180px;width:1px;height:5px;background:#000"></div>
<svg class="a" style="left:20px;top:174px" width="16" height="16" viewBox="0 0 16 16"><rect x="1" y="4" width="14" height="11" fill="#F0C040" stroke="#907020" stroke-width=".8"/><rect x="3" y="1" width="8" height="10" fill="#404040"/><path d="M5 14l8-10" stroke="#1850C8" stroke-width="2.4"/><circle cx="13" cy="3" r="2" fill="none" stroke="#1850C8" stroke-width="1.5"/></svg>
<div class="a tree" style="left:41px;top:175px">参数</div>
<svg class="a" style="left:20px;top:190px" width="16" height="16" viewBox="0 0 16 16"><circle cx="6" cy="7" r="6" fill="#2880D8"/><path d="M2 4q3 2 5 0M3 10q3-2 6 1" stroke="#40B040" stroke-width="2" fill="none"/><path d="M6.5 4.5h7v11h-7z" fill="#F4F4F4" stroke="#606060" stroke-width=".8"/><path d="M8 8h4M8 10h4M8 12h3" stroke="#808080"/><path d="M10 11l5-6" stroke="#40A020" stroke-width="2"/></svg>
<div class="a tree" style="left:41px;top:191px">全局软元件注释</div>
<div class="a" style="left:5px;top:210px;width:9px;height:9px;border:1px solid #8C8C8C;background:#fff"></div>
<div class="a" style="left:7px;top:214px;width:5px;height:1px;background:#000"></div>
<div class="a" style="left:9px;top:212px;width:1px;height:5px;background:#000"></div>
<svg class="a" style="left:20px;top:206px" width="16" height="16" viewBox="0 0 16 16"><rect x="1" y="6" width="14" height="9" fill="#F0C040" stroke="#907020" stroke-width=".8"/><rect x="3" y="1" width="12" height="8" fill="#40A0D0" stroke="#404040" stroke-width=".8"/><path d="M1 8l5 4" stroke="#208020" stroke-width="2.5"/><rect x="2" y="11" width="13" height="3" fill="#303030"/></svg>
<div class="a tree" style="left:41px;top:207px">程序设置</div>
<div class="a" style="left:5px;top:226px;width:9px;height:9px;border:1px solid #8C8C8C;background:#fff"></div>
<div class="a" style="left:7px;top:230px;width:5px;height:1px;background:#000"></div>
<svg class="a" style="left:20px;top:222px" width="16" height="16" viewBox="0 0 16 16"><rect x="1" y="4" width="15" height="11" fill="#F8D878" stroke="#C8A040" stroke-width=".8"/><circle cx="5" cy="5" r="3" fill="#E87070"/><circle cx="11" cy="5" r="3" fill="#60C060"/><circle cx="8" cy="10" r="3" fill="#F8E8A0"/></svg>
<div class="a tree" style="left:41px;top:223px">程序部件</div>
<div class="a" style="left:24px;top:242px;width:9px;height:9px;border:1px solid #8C8C8C;background:#fff"></div>
<div class="a" style="left:26px;top:246px;width:5px;height:1px;background:#000"></div>
<svg class="a" style="left:39px;top:238px" width="16" height="16" viewBox="0 0 16 16"><rect x="1" y="5" width="15" height="10" fill="#F0D890" stroke="#B09040" stroke-width=".8"/><path d="M4 1.5h5l3 3v7H4z" fill="#fff" stroke="#909090"/><path d="M6 4h4M6 6h4" stroke="#A0A0C0"/><rect x="1" y="8" width="15" height="7" fill="#F8E4A0" stroke="#B09040" stroke-width=".8"/></svg>
<div class="a tree" style="left:60px;top:239px">程序</div>
<svg class="a" style="left:60px;top:254px" width="16" height="16" viewBox="0 0 16 16"><path d="M1.5 0.5h8l3 3v12h-11z" fill="#fff" stroke="#707070"/><path d="M2 8h3M10 8h2M5 5v6M7 5v6M4 7l1 1-1 1M8 7l-1 1 1 1" stroke="#E02020" stroke-width="1.2" fill="none"/></svg>
<div class="a" style="left:77px;top:254px;width:27px;height:16px;background:#ECE9E0"></div>
<div class="a" style="left:78px;top:256px;font-family:'Liberation Mono',monospace;font-weight:bold;font-size:10px;line-height:12px">MAIN</div>
<svg class="a" style="left:39px;top:270px" width="16" height="16" viewBox="0 0 16 16"><rect x="1" y="5" width="15" height="10" fill="#F0D890" stroke="#B09040" stroke-width=".8"/><path d="M4 1.5h5l3 3v7H4z" fill="#fff" stroke="#909090"/><path d="M6 4h4M6 6h4" stroke="#A0A0C0"/><rect x="1" y="8" width="15" height="7" fill="#F8E4A0" stroke="#B09040" stroke-width=".8"/></svg>
<div class="a tree" style="left:60px;top:271px">本地软元件注释</div>
<div class="a" style="left:5px;top:290px;width:9px;height:9px;border:1px solid #8C8C8C;background:#fff"></div>
<div class="a" style="left:7px;top:294px;width:5px;height:1px;background:#000"></div>
<div class="a" style="left:9px;top:292px;width:1px;height:5px;background:#000"></div>
<svg class="a" style="left:20px;top:286px" width="16" height="16" viewBox="0 0 16 16"><rect x="1" y="4" width="15" height="11" fill="#F0C040" stroke="#907020" stroke-width=".8"/><rect x="3" y="1" width="10" height="12" fill="#303030"/><circle cx="8" cy="9" r="4" fill="#E05030"/><path d="M8 9l4 2a4 4 0 0 1-7 1z" fill="#40B040"/><path d="M8 9V5a4 4 0 0 1 4 4z" fill="#3070D0"/></svg>
<div class="a tree" style="left:41px;top:287px">软元件存储器</div>
<svg class="a" style="left:6px;top:625px" width="24" height="24" viewBox="0 0 24 24"><path d="M0 16l7-4V2l6-1v12z" fill="#909090"/><path d="M7 2l6-1v11l-6 2z" fill="#505050"/><rect x="8" y="9" width="6" height="14" fill="#E02020"/><rect x="8" y="9" width="2" height="14" fill="#F05040"/><rect x="14" y="5" width="9" height="18" fill="#404040"/><rect x="16" y="7" width="5" height="14" fill="#707070"/><path d="M17 9h3M17 12h3M17 15h3M17 18h3" stroke="#D0D0D0"/></svg>
<svg class="a" style="left:6px;top:657px" width="24" height="24" viewBox="0 0 24 24"><path d="M1 4q6-2 11 0q5-2 11 0v13q-6-2-11 0q-5-2-11 0z" fill="#F6F0DC" stroke="#7C6C50"/><path d="M3 7h7M3 10h7M3 13h7M14 7h7M14 10h7" stroke="#C8BC98"/><path d="M14 13q3-4 7 0l1 7h-7z" fill="#F0C860" stroke="#B08830" stroke-width=".7"/><rect x="15" y="19" width="7" height="5" fill="#58B058"/></svg>
<svg class="a" style="left:6px;top:689px" width="24" height="24" viewBox="0 0 24 24"><rect x="2" y="1" width="15" height="12" fill="#1890E0" stroke="#205878"/><rect x="4" y="3" width="11" height="8" fill="#40C0F8"/><path d="M1 15h16v3H1z" fill="#58B858" stroke="#308030" stroke-width=".7"/><rect x="16" y="6" width="8" height="18" fill="#383838"/><path d="M18 9h4M18 12h4M18 15h4" stroke="#A0A0A0"/></svg>
<div class="a" style="left:185px;top:100px;width:1084px;height:26px;background:linear-gradient(#F2F2F5,#F4F4F7 50%,#FAFBFD)"></div>
<div class="a" style="left:185px;top:125px;width:1084px;height:1px;background:#6E7A8A"></div>
<div class="a" style="left:185px;top:126px;width:1084px;height:2px;background:#C8B89C"></div>
<svg class="a" style="left:184px;top:103px" width="150" height="25"><path d="M0.5 24.5L25.5 0.5H143a3 3 0 0 1 3 3V24" fill="url(#tg)" stroke="#2E3A6A" stroke-width="1"/><defs><linearGradient id="tg" x1="0" y1="0" x2="0" y2="1"><stop offset="0" stop-color="#FEF3DE"/><stop offset="1" stop-color="#F8C585"/></linearGradient></defs></svg>
<svg class="a" style="left:215px;top:108px" width="13" height="16" viewBox="0 0 13 16"><path d="M1.5 0.5h7l3 3v11h-10z" fill="#fff" stroke="#707080"/><path d="M1 7.5h3M9 7.5h3M4.5 4v7M7.5 4v7" stroke="#E02020" stroke-width="1.2"/><path d="M5 6l1.5 1.5L5 9M7 6L5.5 7.5 7 9" stroke="#E02020" fill="none"/></svg>
<div class="a" style="left:233px;top:109px;font-family:'Liberation Mono',monospace;font-weight:bold;font-size:11.5px;line-height:12px;letter-spacing:-0.1px">[PRG] MAIN</div>
<div class="a" style="left:311px;top:106px;width:15px;height:15px;background:#FBF3E4;border:1px solid #E0D2B8"></div>
<svg class="a" style="left:313px;top:108px" width="11" height="11"><path d="M2 2L9 9M9 2L2 9" stroke="#8A8070" stroke-width="2"/></svg>
<svg class="a" style="left:1232px;top:106px" width="37" height="14"><path d="M8.5 1.5v10L3.5 6.5z M20.5 1.5v10L25.5 6.5z" stroke="#000" fill="none" stroke-width="1"/><path d="M32 8h5l-2.5 3z" fill="#000"/></svg>
<div class="a" style="left:185px;top:128px;width:3px;height:595px;background:linear-gradient(90deg,#B0A898,#C4BCAC 50%,#D4CCBC)"></div>
<div class="a" style="left:188px;top:128px;width:1071px;height:595px;background:#fff"></div>
<div class="a" style="left:1259px;top:128px;width:10px;height:595px;background:#F3F2EC"></div>
<div class="a" style="left:1261px;top:130px;width:14px;height:15px;border:1px solid #B4C8F0;border-radius:2px;background:linear-gradient(#DDE6FA,#BACDF6)"></div>
<svg class="a" style="left:1263px;top:134px" width="8" height="6"><path d="M0 5L4 1L8 5" stroke="#4D6185" stroke-width="2" fill="none"/></svg>
<div class="a" style="left:1261px;top:148px;width:14px;height:15px;border:1px solid #B4C8F0;border-radius:2px;background:linear-gradient(#DDE6FA,#BACDF6)"></div>
<div class="a" style="left:1264px;top:152px;width:8px;height:7px;background:repeating-linear-gradient(#8DA4D0 0 1px,transparent 1px 2px)"></div>
<svg class="a" style="left:0;top:0" width="1269" height="723" font-family="Liberation Sans" font-size="13" shape-rendering="crispEdges"><rect x="270" y="197" width="1" height="526" fill="#000"/><rect x="1251" y="128" width="1" height="595" fill="#000"/><rect x="271" y="162" width="33" height="1" fill="#000"/><rect x="304" y="152" width="1" height="20" fill="#000"/><rect x="316" y="152" width="1" height="20" fill="#000"/><text x="310.5" y="145" text-anchor="middle">M8000</text><rect x="317" y="162" width="841" height="1" fill="#000"/><path d="M1162.5 153.5L1158.5 157.5L1157.5 161.5V163.5L1158.5 166.5L1162.5 170.5" stroke="#000" fill="none" stroke-width="1" shape-rendering="auto"/><path d="M1243.5 153.5L1247.5 157.5L1248.5 161.5V163.5L1247.5 166.5L1243.5 170.5" stroke="#000" fill="none" stroke-width="1" shape-rendering="auto"/><rect x="1249" y="162" width="2" height="1" fill="#000"/><text x="1165" y="165" text-anchor="start">T100</text><text x="1191" y="145" text-anchor="start">K50</text><text x="265" y="165" text-anchor="end">0</text><rect x="271" y="129" width="1" height="68" fill="#101030"/><rect x="271" y="129" width="80" height="2" fill="#000066"/><rect x="349" y="129" width="2" height="68" fill="#000066"/><rect x="271" y="195" width="80" height="2" fill="#000066"/><rect x="271" y="230" width="33" height="1" fill="#000"/><rect x="304" y="220" width="1" height="20" fill="#000"/><rect x="316" y="220" width="1" height="20" fill="#000"/><text x="310.5" y="213" text-anchor="middle">M115</text><rect x="317" y="230" width="68" height="1" fill="#000"/><rect x="385" y="220" width="1" height="20" fill="#000"/><rect x="396" y="220" width="1" height="20" fill="#000"/><line x1="379.5" y1="241.5" x2="402.5" y2="221.5" stroke="#000" stroke-width="1"/><text x="391.0" y="213" text-anchor="middle">M116</text><rect x="397" y="230" width="680" height="1" fill="#000"/><rect x="431" y="230" width="1" height="68" fill="#000"/><rect x="431" y="297" width="34" height="1" fill="#000"/><rect x="465" y="287" width="1" height="20" fill="#000"/><rect x="476" y="287" width="1" height="20" fill="#000"/><line x1="459.5" y1="308.5" x2="482.5" y2="288.5" stroke="#000" stroke-width="1"/><text x="471.0" y="280" text-anchor="middle">M216</text><rect x="477" y="297" width="600" height="1" fill="#000"/><rect x="1077" y="220" width="1" height="20" fill="#000"/><rect x="1077" y="220" width="5" height="1" fill="#000"/><rect x="1077" y="239" width="5" height="1" fill="#000"/><rect x="1248" y="220" width="1" height="20" fill="#000"/><rect x="1244" y="220" width="5" height="1" fill="#000"/><rect x="1244" y="239" width="5" height="1" fill="#000"/><rect x="1248" y="230" width="3" height="1" fill="#000"/><text x="1085" y="233" text-anchor="start">RST</text><text x="1162" y="233" text-anchor="start">M216</text><rect x="1077" y="287" width="1" height="20" fill="#000"/><rect x="1077" y="287" width="5" height="1" fill="#000"/><rect x="1077" y="306" width="5" height="1" fill="#000"/><rect x="1248" y="287" width="1" height="20" fill="#000"/><rect x="1244" y="287" width="5" height="1" fill="#000"/><rect x="1244" y="306" width="5" height="1" fill="#000"/><rect x="1248" y="297" width="3" height="1" fill="#000"/><text x="1085" y="300" text-anchor="start">SET</text><text x="1162" y="300" text-anchor="start">M215</text><text x="265" y="233" text-anchor="end">4</text><rect x="271" y="365" width="33" height="1" fill="#000"/><rect x="304" y="355" width="1" height="20" fill="#000"/><rect x="316" y="355" width="1" height="20" fill="#000"/><text x="310.5" y="348" text-anchor="middle">M116</text><rect x="317" y="365" width="68" height="1" fill="#000"/><rect x="385" y="355" width="1" height="20" fill="#000"/><rect x="396" y="355" width="1" height="20" fill="#000"/><line x1="379.5" y1="376.5" x2="402.5" y2="356.5" stroke="#000" stroke-width="1"/><text x="391.0" y="348" text-anchor="middle">M115</text><rect x="397" y="365" width="68" height="1" fill="#000"/><rect x="465" y="355" width="1" height="20" fill="#000"/><rect x="476" y="355" width="1" height="20" fill="#000"/><text x="471.0" y="348" text-anchor="middle">X025</text><rect x="477" y="365" width="600" height="1" fill="#000"/><rect x="511" y="365" width="1" height="69" fill="#000"/><rect x="511" y="433" width="34" height="1" fill="#000"/><rect x="545" y="423" width="1" height="20" fill="#000"/><rect x="557" y="423" width="1" height="20" fill="#000"/><line x1="539.5" y1="444.5" x2="562.5" y2="424.5" stroke="#000" stroke-width="1"/><text x="551.5" y="416" text-anchor="middle">M215</text><rect x="558" y="433" width="519" height="1" fill="#000"/><rect x="1077" y="355" width="1" height="20" fill="#000"/><rect x="1077" y="355" width="5" height="1" fill="#000"/><rect x="1077" y="374" width="5" height="1" fill="#000"/><rect x="1248" y="355" width="1" height="20" fill="#000"/><rect x="1244" y="355" width="5" height="1" fill="#000"/><rect x="1244" y="374" width="5" height="1" fill="#000"/><rect x="1248" y="365" width="3" height="1" fill="#000"/><text x="1085" y="368" text-anchor="start">RST</text><text x="1162" y="368" text-anchor="start">M215</text><rect x="1077" y="423" width="1" height="20" fill="#000"/><rect x="1077" y="423" width="5" height="1" fill="#000"/><rect x="1077" y="442" width="5" height="1" fill="#000"/><rect x="1248" y="423" width="1" height="20" fill="#000"/><rect x="1244" y="423" width="5" height="1" fill="#000"/><rect x="1244" y="442" width="5" height="1" fill="#000"/><rect x="1248" y="433" width="3" height="1" fill="#000"/><text x="1085" y="436" text-anchor="start">SET</text><text x="1162" y="436" text-anchor="start">M216</text><text x="265" y="368" text-anchor="end">9</text><rect x="271" y="500" width="33" height="1" fill="#000"/><rect x="304" y="490" width="1" height="20" fill="#000"/><rect x="316" y="490" width="1" height="20" fill="#000"/><text x="310.5" y="483" text-anchor="middle">M105</text><rect x="317" y="500" width="68" height="1" fill="#000"/><rect x="385" y="490" width="1" height="20" fill="#000"/><rect x="396" y="490" width="1" height="20" fill="#000"/><line x1="379.5" y1="511.5" x2="402.5" y2="491.5" stroke="#000" stroke-width="1"/><text x="391.0" y="483" text-anchor="middle">M106</text><rect x="397" y="500" width="680" height="1" fill="#000"/><rect x="431" y="500" width="1" height="69" fill="#000"/><rect x="431" y="568" width="34" height="1" fill="#000"/><rect x="465" y="558" width="1" height="20" fill="#000"/><rect x="476" y="558" width="1" height="20" fill="#000"/><line x1="459.5" y1="579.5" x2="482.5" y2="559.5" stroke="#000" stroke-width="1"/><text x="471.0" y="551" text-anchor="middle">M206</text><rect x="477" y="568" width="600" height="1" fill="#000"/><rect x="1077" y="490" width="1" height="20" fill="#000"/><rect x="1077" y="490" width="5" height="1" fill="#000"/><rect x="1077" y="509" width="5" height="1" fill="#000"/><rect x="1248" y="490" width="1" height="20" fill="#000"/><rect x="1244" y="490" width="5" height="1" fill="#000"/><rect x="1244" y="509" width="5" height="1" fill="#000"/><rect x="1248" y="500" width="3" height="1" fill="#000"/><text x="1085" y="503" text-anchor="start">RST</text><text x="1162" y="503" text-anchor="start">M206</text><rect x="1077" y="558" width="1" height="20" fill="#000"/><rect x="1077" y="558" width="5" height="1" fill="#000"/><rect x="1077" y="577" width="5" height="1" fill="#000"/><rect x="1248" y="558" width="1" height="20" fill="#000"/><rect x="1244" y="558" width="5" height="1" fill="#000"/><rect x="1244" y="577" width="5" height="1" fill="#000"/><rect x="1248" y="568" width="3" height="1" fill="#000"/><text x="1085" y="571" text-anchor="start">SET</text><text x="1162" y="571" text-anchor="start">M205</text><text x="265" y="503" text-anchor="end">15</text><rect x="271" y="636" width="33" height="1" fill="#000"/><rect x="304" y="626" width="1" height="20" fill="#000"/><rect x="316" y="626" width="1" height="20" fill="#000"/><text x="310.5" y="619" text-anchor="middle">M106</text><rect x="317" y="636" width="68" height="1" fill="#000"/><rect x="385" y="626" width="1" height="20" fill="#000"/><rect x="396" y="626" width="1" height="20" fill="#000"/><line x1="379.5" y1="647.5" x2="402.5" y2="627.5" stroke="#000" stroke-width="1"/><text x="391.0" y="619" text-anchor="middle">M105</text><rect x="397" y="636" width="68" height="1" fill="#000"/><rect x="465" y="626" width="1" height="20" fill="#000"/><rect x="476" y="626" width="1" height="20" fill="#000"/><text x="471.0" y="619" text-anchor="middle">X025</text><rect x="477" y="636" width="600" height="1" fill="#000"/><rect x="511" y="636" width="1" height="69" fill="#000"/><rect x="511" y="704" width="34" height="1" fill="#000"/><rect x="545" y="694" width="1" height="20" fill="#000"/><rect x="557" y="694" width="1" height="20" fill="#000"/><line x1="539.5" y1="715.5" x2="562.5" y2="695.5" stroke="#000" stroke-width="1"/><text x="551.5" y="687" text-anchor="middle">M205</text><rect x="558" y="704" width="519" height="1" fill="#000"/><rect x="1077" y="626" width="1" height="20" fill="#000"/><rect x="1077" y="626" width="5" height="1" fill="#000"/><rect x="1077" y="645" width="5" height="1" fill="#000"/><rect x="1248" y="626" width="1" height="20" fill="#000"/><rect x="1244" y="626" width="5" height="1" fill="#000"/><rect x="1244" y="645" width="5" height="1" fill="#000"/><rect x="1248" y="636" width="3" height="1" fill="#000"/><text x="1085" y="639" text-anchor="start">RST</text><text x="1162" y="639" text-anchor="start">M205</text><rect x="1077" y="694" width="1" height="20" fill="#000"/><rect x="1077" y="694" width="5" height="1" fill="#000"/><rect x="1077" y="713" width="5" height="1" fill="#000"/><rect x="1248" y="694" width="1" height="20" fill="#000"/><rect x="1244" y="694" width="5" height="1" fill="#000"/><rect x="1244" y="713" width="5" height="1" fill="#000"/><rect x="1248" y="704" width="3" height="1" fill="#000"/><text x="1085" y="707" text-anchor="start">SET</text><text x="1162" y="707" text-anchor="start">M206</text><text x="265" y="639" text-anchor="end">20</text></svg>
</body></html>
